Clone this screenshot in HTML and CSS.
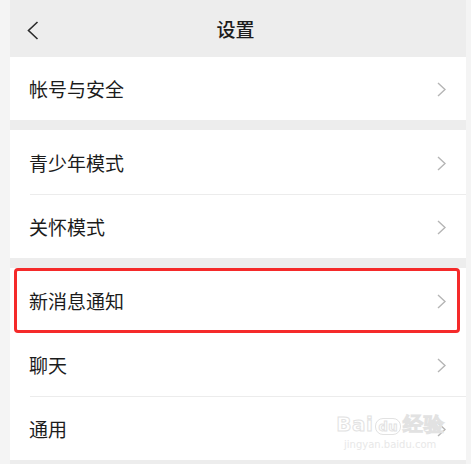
FILE: index.html
```html
<html>
  <head>
    <title>设置</title>
    <link rel="stylesheet" href="styles.css">
  </head>
  <body>
    <div class="screen">
      <div class="topbar">
        <span class="back">
          <svg width="12" height="19" viewBox="0 0 12 19"><polyline points="10.5,1 1.5,9.5 10.5,18" fill="none" stroke="#2b2b2b" stroke-width="1.6"/></svg>
        </span>
        <span class="title">设置</span>
      </div>

      <div class="group">
        <div class="row first"><span>帐号与安全</span><svg class="arrow" width="9" height="15" viewBox="0 0 9 15"><polyline points="1,1 8,7.5 1,14" fill="none" stroke="#b5b5b5" stroke-width="1.4"/></svg></div>
      </div>

      <div class="group">
        <div class="row"><span>青少年模式</span><svg class="arrow" width="9" height="15" viewBox="0 0 9 15"><polyline points="1,1 8,7.5 1,14" fill="none" stroke="#b5b5b5" stroke-width="1.4"/></svg></div>
        <div class="row line"><span>关怀模式</span><svg class="arrow" width="9" height="15" viewBox="0 0 9 15"><polyline points="1,1 8,7.5 1,14" fill="none" stroke="#b5b5b5" stroke-width="1.4"/></svg></div>
      </div>

      <div class="group last">
        <div class="row highlight"><span>新消息通知</span><svg class="arrow" width="9" height="15" viewBox="0 0 9 15"><polyline points="1,1 8,7.5 1,14" fill="none" stroke="#b5b5b5" stroke-width="1.4"/></svg></div>
        <div class="row"><span>聊天</span><svg class="arrow" width="9" height="15" viewBox="0 0 9 15"><polyline points="1,1 8,7.5 1,14" fill="none" stroke="#b5b5b5" stroke-width="1.4"/></svg></div>
        <div class="row line"><span>通用</span><svg class="arrow" width="9" height="15" viewBox="0 0 9 15"><polyline points="1,1 8,7.5 1,14" fill="none" stroke="#b5b5b5" stroke-width="1.4"/></svg></div>
        <div class="watermark">
          <div class="wm-big">Bai<span class="wm-du">du</span>经验</div>
          <div class="wm-small">jingyan.baidu.com</div>
        </div>
      </div>
    </div>
  </body>
</html>
```

FILE: styles.css
```css
body {
  margin: 0;
  background: #f4f4f4;
  font-family: "Noto Sans CJK SC", "Noto Sans", sans-serif;
  color: #1c1c1c;
}

.screen {
  margin-left: 10px;
  width: 456px;
  height: 464px;
  overflow: hidden;
  background: #ededed;
}

.topbar {
  position: relative;
  height: 57px;
  background: #ededed;
  display: flex;
  align-items: center;
  justify-content: center;
}

.topbar .back {
  position: absolute;
  left: 17px;
  top: 21px;
  display: flex;
}

.topbar .title {
  font-size: 19px;
  font-weight: 500;
  margin-left: -5px;
}

.group {
  background: #fff;
  margin-bottom: 10px;
}

.group.last {
  position: relative;
  margin-bottom: 0;
}

.row {
  position: relative;
  height: 64px;
  display: flex;
  align-items: center;
  justify-content: space-between;
  padding: 0 20px 0 19px;
  font-size: 19px;
}

.row.first {
  height: 63px;
}

.row.line::before {
  content: "";
  position: absolute;
  top: 0;
  left: 20px;
  right: 0;
  border-top: 1px solid #ececec;
}

.row .arrow {
  margin-top: 2px;
}

.row.highlight::after {
  content: "";
  position: absolute;
  top: 0;
  bottom: -1px;
  left: 4px;
  right: 6px;
  border: 3px solid #f52a2a;
  border-radius: 4px;
}

.watermark {
  position: absolute;
  right: 22px;
  bottom: 10px;
  text-align: center;
  color: #fff;
  pointer-events: none;
}

.wm-big {
  font-family: "DejaVu Sans", sans-serif;
  font-size: 20px;
  font-weight: bold;
  -webkit-text-stroke: 1px #e2e2e2;
  letter-spacing: 0.5px;
}

.wm-du {
  font-size: 13px;
  border: 1px solid #e2e2e2;
  border-radius: 8px;
  padding: 0 2px;
  margin: 0 2px;
}

.wm-small {
  font-family: "DejaVu Sans", sans-serif;
  font-size: 10px;
  color: #e8e8e8;
  margin-top: 1px;
}
```
